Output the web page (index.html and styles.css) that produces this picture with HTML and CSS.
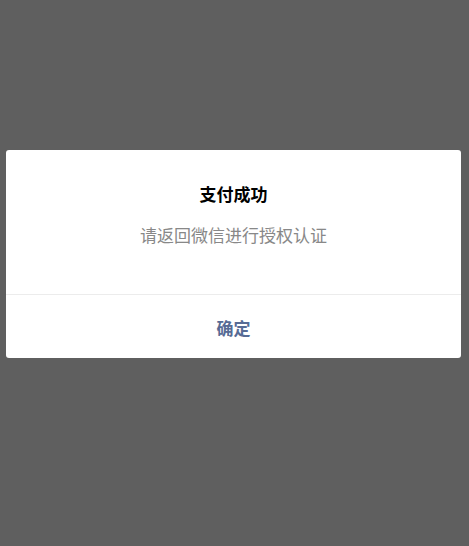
FILE: index.html
```html
<!DOCTYPE html>
<html lang="zh-CN">
<head>
<meta charset="utf-8">
<link rel="stylesheet" href="styles.css">
</head>
<body>
<div class="mask">
  <div class="dialog">
    <div class="hd">支付成功</div>
    <div class="bd">请返回微信进行授权认证</div>
    <div class="ft">确定</div>
  </div>
</div>
</body>
</html>
```
FILE: styles.css
```css
html, body {
  margin: 0;
  padding: 0;
  height: 100%;
}
body {
  background: #5f5f5f;
  font-family: "Noto Sans CJK SC", "Noto Sans", sans-serif;
}
.mask {
  height: 100%;
  display: flex;
  flex-direction: column;
  justify-content: center;
  padding: 0 8px 38px 6px;
  box-sizing: border-box;
}
.dialog {
  background: #fff;
  border-radius: 3px;
  text-align: center;
  overflow: hidden;
}
.hd {
  padding: 32px 24px 0;
  font-size: 17px;
  font-weight: 700;
  line-height: 24px;
  color: #000;
}
.bd {
  padding: 17px 24px 0;
  font-size: 17px;
  line-height: 24px;
  color: #888;
  min-height: 71px;
}
.ft {
  border-top: 1px solid #ececec;
  height: 63px;
  line-height: 65px;
  font-size: 17px;
  font-weight: 700;
  color: #576b95;
}
```
